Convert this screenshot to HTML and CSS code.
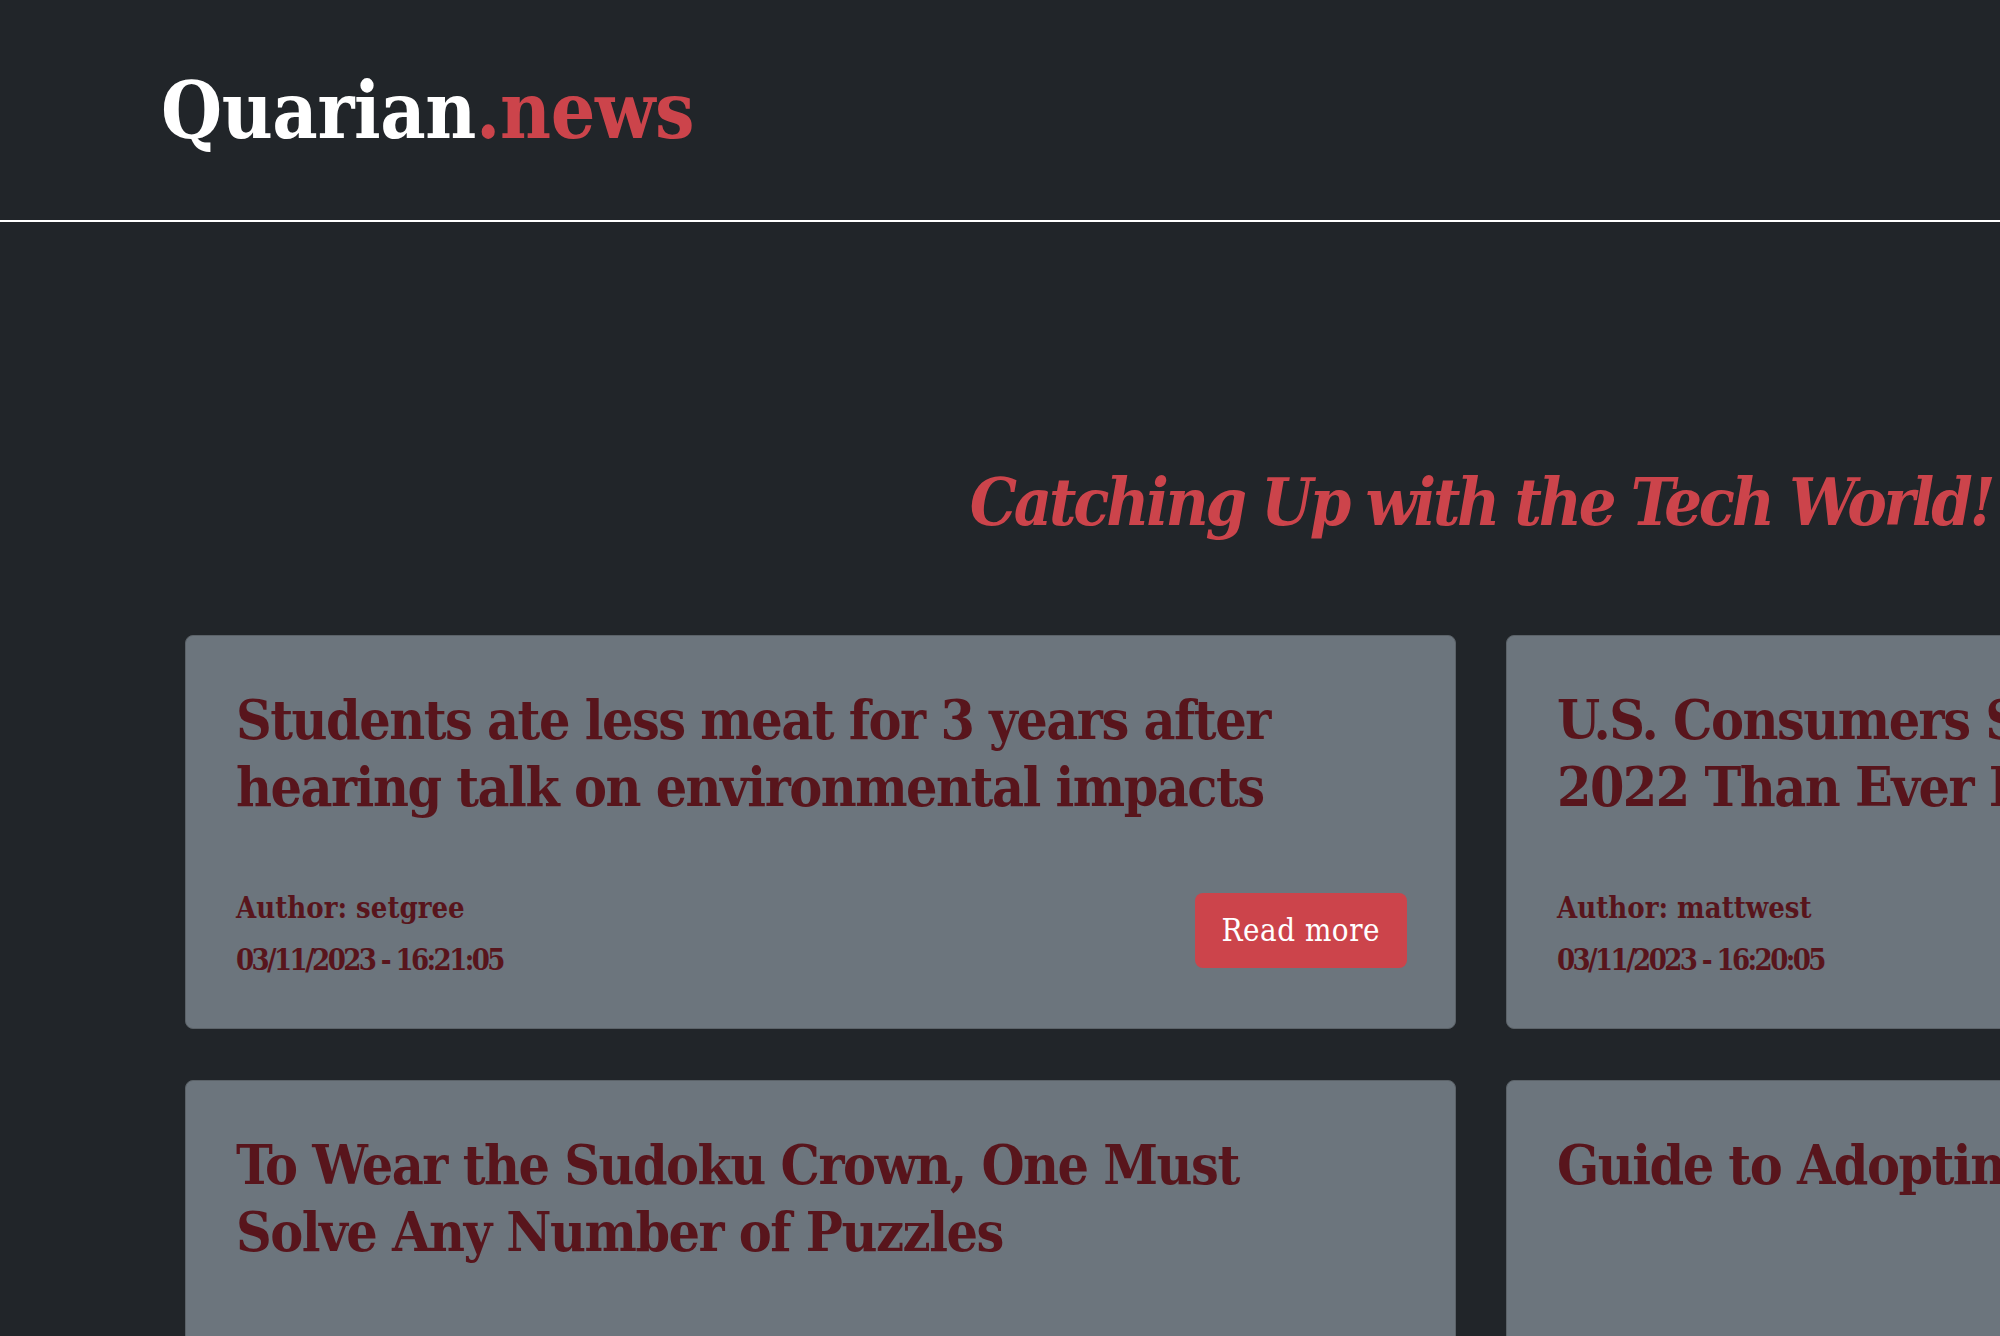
FILE: index.html
```html
<!DOCTYPE html>
<html lang="en">
<head>
<meta charset="utf-8">
<title>Quarian.news</title>
<link rel="stylesheet" href="styles.css">
</head>
<body>
<header class="site-header">
  <div class="logo">Quarian<span class="logo-accent">.news</span></div>
</header>
<main class="main">
  <h1 class="tagline">Catching Up with the Tech World!</h1>
  <section class="grid">
    <article class="card">
      <h2 class="card-title">Students ate less meat for 3 years after hearing talk on environmental impacts</h2>
      <div class="card-meta">
        <div class="meta-text">
          <div class="author">Author: setgree</div>
          <div class="date">03/11/2023 - 16:21:05</div>
        </div>
        <a class="btn" href="#">Read more</a>
      </div>
    </article>
    <article class="card">
      <h2 class="card-title">U.S. Consumers Spent More on Gadgets in 2022 Than Ever Before</h2>
      <div class="card-meta">
        <div class="meta-text">
          <div class="author">Author: mattwest</div>
          <div class="date">03/11/2023 - 16:20:05</div>
        </div>
        <a class="btn" href="#">Read more</a>
      </div>
    </article>
    <article class="card">
      <h2 class="card-title">To Wear the Sudoku Crown, One Must Solve Any Number of Puzzles</h2>
      <div class="card-meta">
        <div class="meta-text">
          <div class="author">Author: pseudolus</div>
          <div class="date">03/11/2023 - 16:19:05</div>
        </div>
        <a class="btn" href="#">Read more</a>
      </div>
    </article>
    <article class="card">
      <h2 class="card-title">Guide to Adopting Open Source Software</h2>
      <div class="card-meta">
        <div class="meta-text">
          <div class="author">Author: ingve</div>
          <div class="date">03/11/2023 - 16:18:05</div>
        </div>
        <a class="btn" href="#">Read more</a>
      </div>
    </article>
  </section>
</main>
</body>
</html>
```
FILE: styles.css
```css
html, body {
  margin: 0;
  padding: 0;
  overflow: hidden;
}
body {
  background: #212529;
  font-family: "DejaVu Serif", serif;
  font-stretch: condensed;
  width: 2962px;
}
.site-header {
  box-sizing: border-box;
  height: 222px;
  padding: 72px 0 0 161px;
  border-bottom: 2px solid #ffffff;
}
.logo {
  font-size: 78px;
  line-height: 78px;
  font-weight: 700;
  letter-spacing: -0.4px;
  color: #ffffff;
}
.logo-accent {
  color: #cc444b;
}
.main {
  padding: 0 0 0 185px;
}
.tagline {
  margin: 247px 0 0 0;
  width: 2592px;
  text-align: center;
  font-size: 66px;
  line-height: 66px;
  font-weight: 700;
  font-style: italic;
  letter-spacing: -3.2px;
  color: #cc444b;
}
.grid {
  margin-top: 100px;
  display: grid;
  grid-template-columns: 1271px 1271px;
  column-gap: 50px;
  row-gap: 51px;
}
.card {
  box-sizing: border-box;
  background: #6c757d;
  border: 1px solid #5b6268;
  border-radius: 8px;
  padding: 50px 48px 50px 50px;
  display: flex;
  flex-direction: column;
}
.card-title {
  margin: 0 33px 70px 0;
  font-size: 55px;
  line-height: 67px;
  font-weight: 700;
  letter-spacing: -1.5px;
  color: #58151c;
}
.card-meta {
  margin-top: auto;
  display: flex;
  align-items: center;
  justify-content: space-between;
}
.author, .date {
  font-size: 29px;
  line-height: 36px;
  font-weight: 700;
  color: #58151c;
}
.date {
  margin-top: 16px;
  letter-spacing: -2.6px;
}
.btn {
  display: block;
  margin-bottom: 8px;
  padding: 15px 27px;
  line-height: 45px;
  font-size: 31px;
  letter-spacing: 0.5px;
  color: #ffffff;
  background: #cc444b;
  border-radius: 8px;
  text-decoration: none;
}
```
